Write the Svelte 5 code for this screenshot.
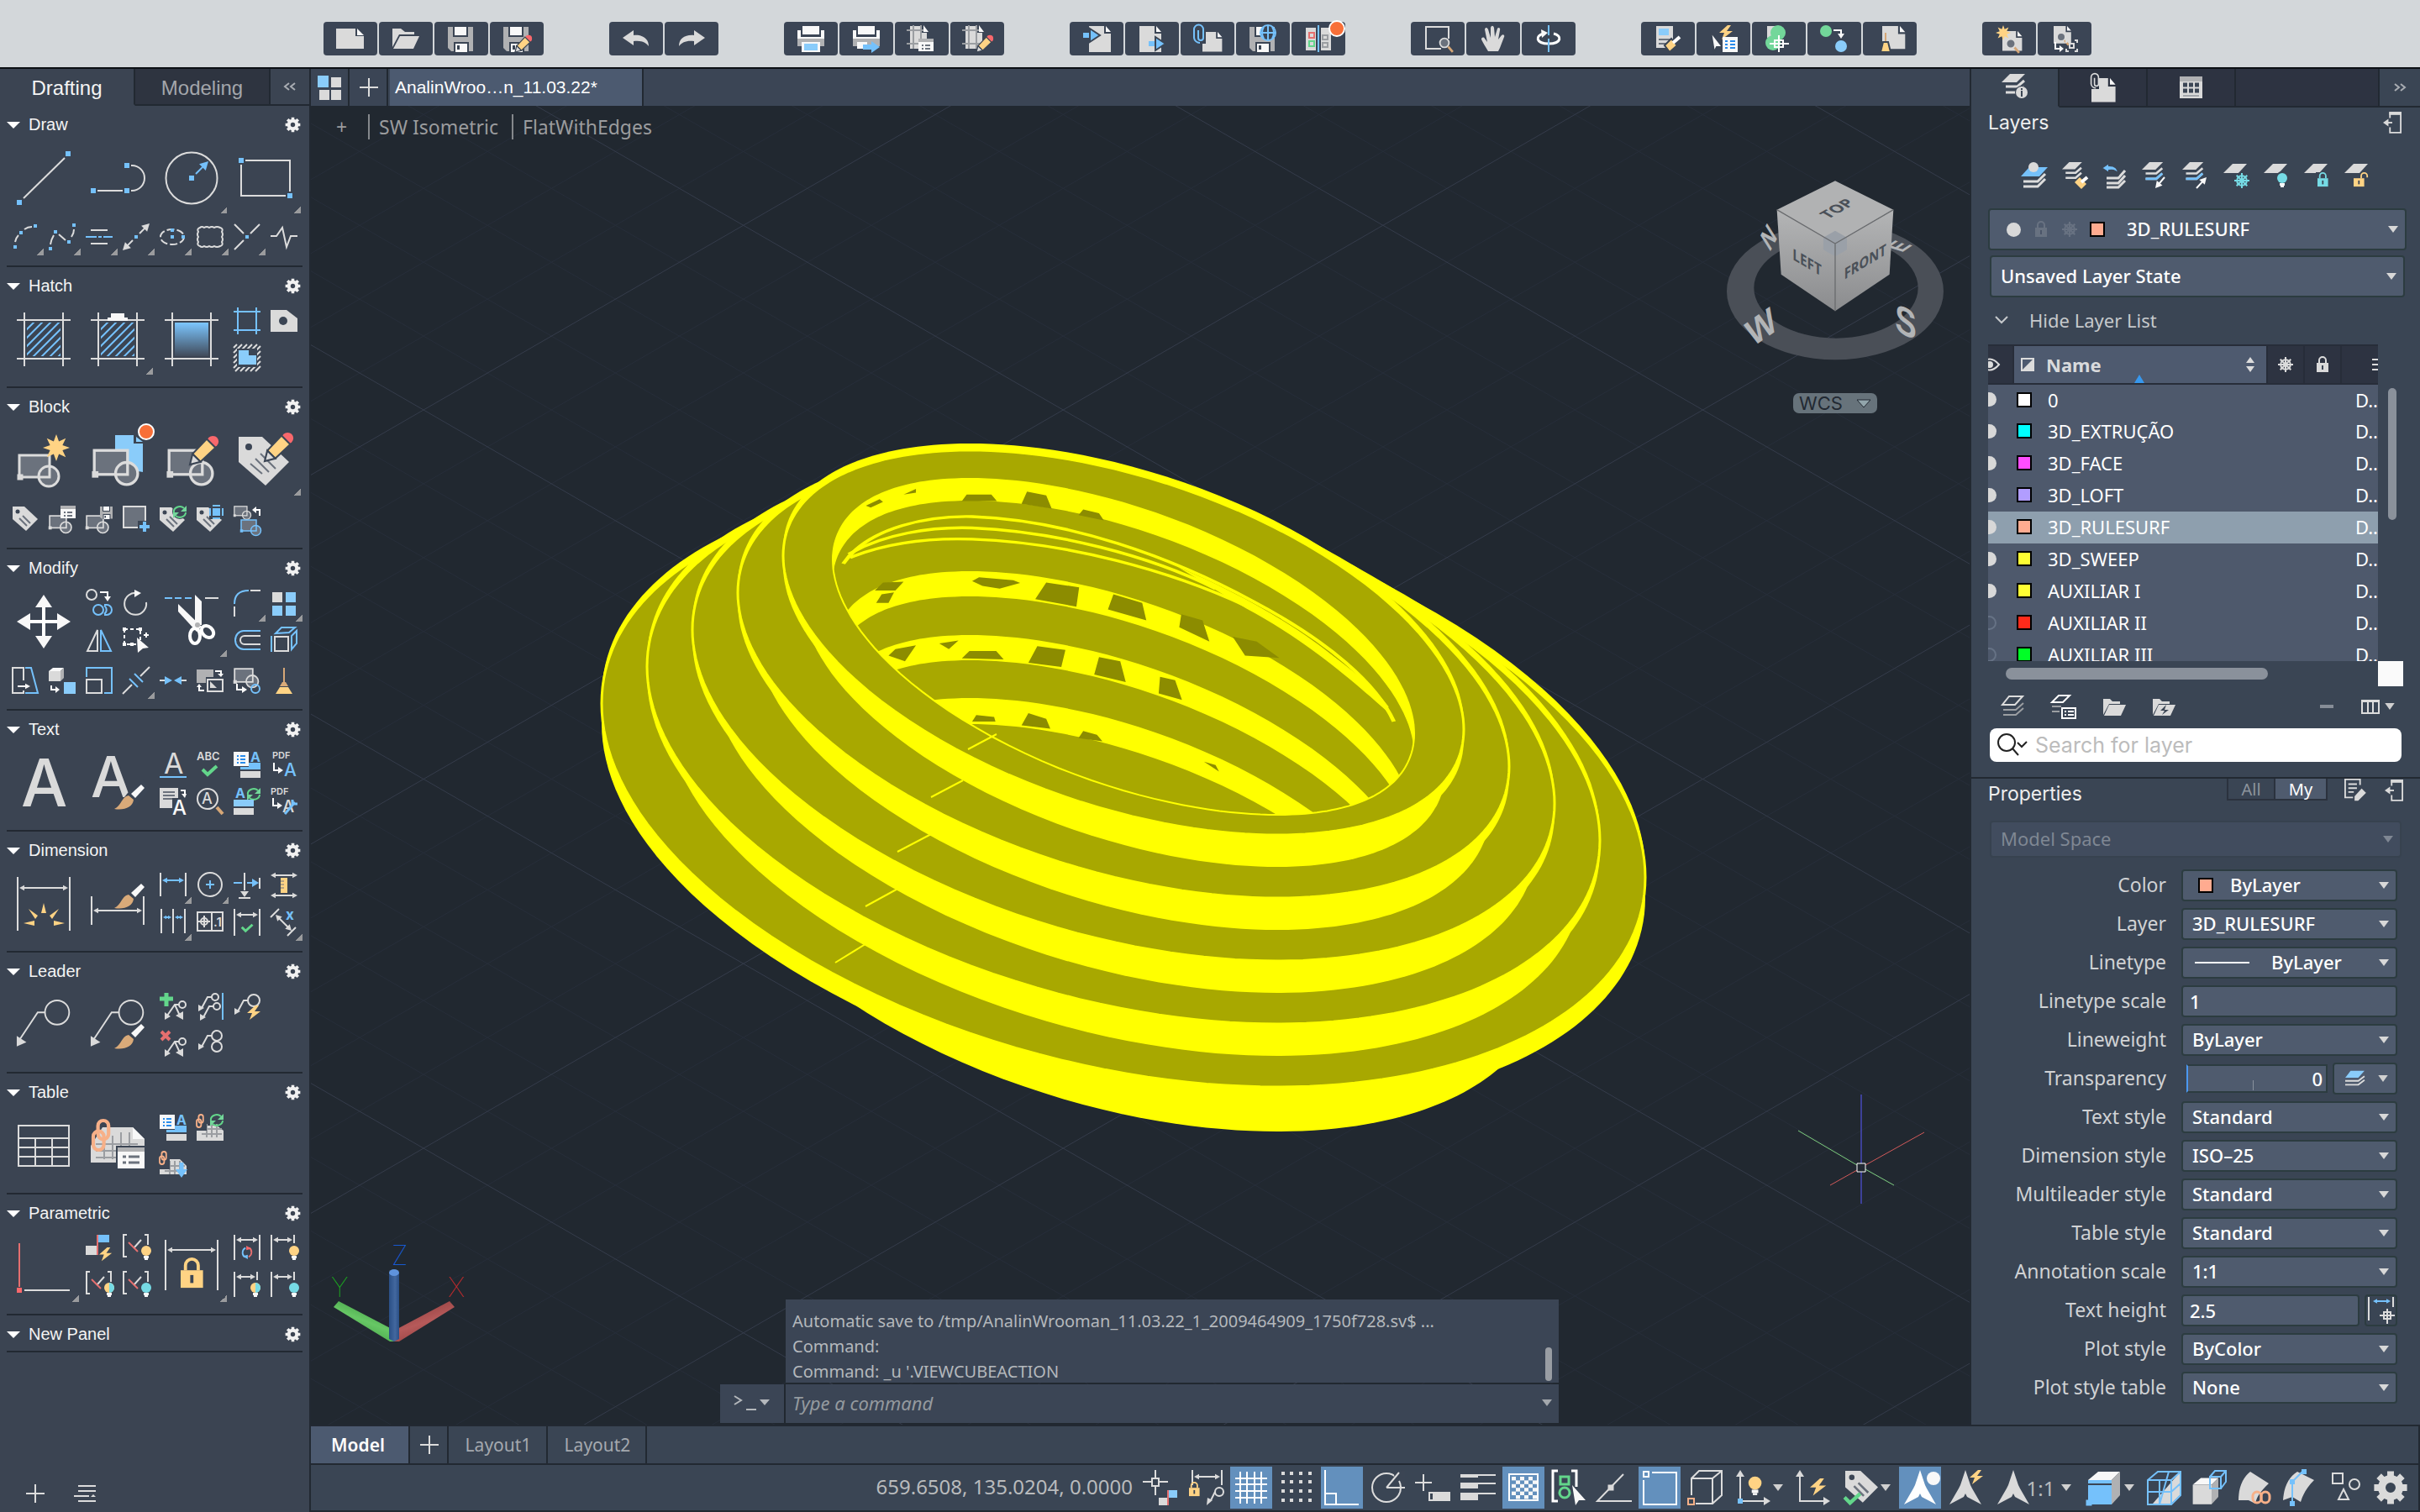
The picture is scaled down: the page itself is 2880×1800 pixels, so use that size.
<script>
  // ---------- drawing helpers for the icon set ----------
  const sq = (x, y, c = 'fb', s = 6) => `<rect class="${c}" x="${x - s / 2}" y="${y - s / 2}" width="${s}" height="${s}"/>`;
  const ln = (d, c = 'sw', w = 2) => `<path class="${c}" stroke-width="${w}" d="${d}"/>`;
  const fl = (d, c = 'fw') => `<path class="${c}" d="${d}"/>`;
  const box = (x, y, w, h, c = 'fw') => `<rect class="${c}" x="${x}" y="${y}" width="${w}" height="${h}"/>`;
  const ci = (x, y, r, c = 'sw', w = 2) => `<circle class="${c}" stroke-width="${w}" cx="${x}" cy="${y}" r="${r}"/>`;
  const at = (x, y, s, body) => `<g transform="translate(${x} ${y}) scale(${s})">${body}</g>`;
  const tx = (x, y, size, t, c = 'fw', w = 500) => `<text class="${c} glyph" x="${x}" y="${y}" font-size="${size}" font-weight="${w}">${t}</text>`;
  function arrow(x1, y1, x2, y2, c = 'w', h = 7, both = false, w = 2) {
    const a = Math.atan2(y2 - y1, x2 - x1);
    const head = (x, y, t) => {
      const bx = x - h * Math.cos(t), by = y - h * Math.sin(t);
      const px = h * 0.55 * Math.sin(t), py = -h * 0.55 * Math.cos(t);
      return fl(`M${x} ${y}L${bx + px} ${by + py}L${bx - px} ${by - py}Z`, 'f' + c);
    };
    const sx = both ? x1 + (h - 1) * Math.cos(a) : x1, sy = both ? y1 + (h - 1) * Math.sin(a) : y1;
    const ex = x2 - (h - 1) * Math.cos(a), ey = y2 - (h - 1) * Math.sin(a);
    return ln(`M${sx} ${sy}L${ex} ${ey}`, 's' + c, w) + head(x2, y2, a) + (both ? head(x1, y1, a + Math.PI) : '');
  }
  const pencil = (x, y, s = 1) => at(x, y, s, `<circle class="fr" cx="26" cy="-26" r="6.5"/>` + fl('M3 -12L19 -29L29 -19L12 -3Z', 'fy outline') + fl('M0 0L3 -12L12 -3Z', 'fw outline'));
  const brush = (x, y, s = 1) => at(x, y, s, fl('M0 0C9 -4 8 -14 17 -16L23 -11C22 -2 12 2 0 0Z', 'fn') + fl('M20 -18L32 -29L36 -25L25 -13Z', 'fp'));
  const bolt = (x, y, s = 1) => at(x, y, s, fl('M10 0L0 9H6L3 17L16 7H9L14 0Z', 'fy'));
  const bulb = (x, y, c = 'fy') => ci(x, y, 6, c, 0) + box(x - 3, y + 6, 6, 3, 'fp') + box(x - 2, y + 9, 4, 2, 'fp');
  const bulb2 = (x, y) => bulb(x, y) + fl(`M${x} ${y - 6}A6 6 0 0 1 ${x} ${y + 6}Z`, 'ft');
  const lock = (x, y, s = 1, c = 'y', open = false) => at(x, y, s, ln(open ? 'M10 8V5A4 4 0 0 1 18 5V7' : 'M3 8V5A4 4 0 0 1 11 5V8', 's' + c) + box(0, 8, 14, 11, 'f' + c) + box(6, 11, 2, 5, 'fk'));
  const refresh = (x, y, s = 1, a = 'g', b = 'g') => at(x, y, s, ln('M-7 1A7 6 0 0 1 5 -4', 's' + a) + fl('M8 -7V0H1Z', 'f' + a) + ln('M7 1A7 6 0 0 1 -5 5', 's' + b) + fl('M-8 8V1H-1Z', 'f' + b));
  const check = (x, y, s = 1) => at(x, y, s, ln('M1 5L7 11L18 1', 'sg', 4));
  const tagBase = fl('M0 0H14L30 15L16 29L0 15Z') + ci(6, 6, 2.5, 'fk', 0) + ln('M12 11L21 20M8 14L17 23', 'sm', 2);
  const star = (x, y, r) => { let d = ''; for (let i = 0; i < 16; i++) { const q = i % 2 ? r * 0.5 : r, t = i * Math.PI / 8; d += (i ? 'L' : 'M') + (x + q * Math.cos(t)).toFixed(1) + ' ' + (y + q * Math.sin(t)).toFixed(1); } return fl(d + 'Z', 'fy'); };
  const block = (x, y, s, c = 'w') => at(x, y, s, `<rect class="fm s${c}x" stroke-width="3" x="2" y="2" width="36" height="26"/>` + `<circle class="fm s${c}x" stroke-width="3" cx="37" cy="27" r="12"/>` + ln('M38 16V28H26', 's' + c, 3) + sq(3, 28, 'f' + c, 7));
  const card = (x, y, s = 1) => at(x, y, s, box(0, 0, 18, 15, 'fp') + box(0, 0, 18, 4, 'fh') + ln('M4 8H6M8 8H14M4 12H6M8 12H14', 'sm', 2));
  const frame = ln('M9 0V64M55 0V64M0 9H64M0 55H64');
  const hatchLines = `<g clip-path="url(#hatch-clip)">` + ln('M4 28L28 4M4 38L38 4M4 48L48 4M4 58L58 4M12 60L60 12M22 60L60 22M32 60L60 32M42 60L60 42', 'sb') + '</g>';
  const aList = box(0, 1, 18, 17, 'fp') + ln('M4 6H6M8 6H14M4 10H6M8 10H14M4 14H6M8 14H14', 'si', 2) + tx(20, 13, 16, 'A', 'fb', 700) + box(18, 14, 14, 8, 'fb') + box(8, 19, 24, 3, 'fb') + box(8, 24, 24, 8);
  const dimH = (x1, x2, y, t, b, c = 'w') => ln(`M${x1} ${t}V${b}M${x2} ${t}V${b}`) + arrow(x1 + 2, y, x2 - 2, y, c, 6, true);
  const leader = (x, y, s) => at(x, y, s, ci(52, 17, 15, 'sw', 2) + ln('M37 17H28L6 50') + fl('M2 46V59L14 54Z'));
  const sLeader = (x, y, r = 5) => ci(x, y, r) + ln(`M${x - r} ${y}H${x - r - 5}L${x - r - 12} ${y + 13}`) + fl(`M${x - r - 16} ${y + 17}V${y + 9}L${x - r - 9} ${y + 13}Z`);
  const grid = (c = 'sh') => ln('M6 18H30M6 24H30M12 12V28M18 12V28M24 12V28', c, 2);
  const ang = ln('M5 0H1V26H5M26 0H30V12') + ln('M22 6L13 16', 'sw') + ln('M7 9L18 20', 'sr');
  const stackOf = (c1 = 'fw', c2 = 'sw') => fl('M10 0H28L18 10H0Z', c1) + ln('M5 15H19L27 8M5 22H19L27 15', c2, 3);
  const para = fl('M12 2H29L19 13H1Z');
  const flake = (x, y, r, c) => ln(`M${x - r} ${y}H${x + r}M${x} ${y - r}V${y + r}M${x - r * 0.7} ${y - r * 0.7}L${x + r * 0.7} ${y + r * 0.7}M${x + r * 0.7} ${y - r * 0.7}L${x - r * 0.7} ${y + r * 0.7}`, c) + ci(x, y, r * 0.65, c);
  const page = fl('M0 0H18V9H26V26H0Z') + fl('M20 0L26 7H20Z', 'fp');
  const disk = fl('M2 2H32V31H6L2 27Z', 'fh') + box(9, 1, 16, 12, 'fp outline') + box(9, 20, 18, 12, 'fk') + box(11, 22, 14, 10, 'fp') + box(13, 24, 3, 5, 'fk');
  const printer = box(8, 1, 20, 10, 'fp') + fl('M2 6H6V14H30V6H34V18H2Z', 'fp') + box(2, 16, 32, 9, 'fh');
  const lens = (x, y, s = 1) => at(x, y, s, ci(0, 0, 6, 'fm swx', 2) + ln('M5 5L11 12', 'sn', 3));
  const lay = fl('M4 1H18V9H24V28H4Z') + ln('M0 6H24M0 22H24M8 0V28M17 0V28', 'sh', 2) + fl('M20 0L26 8H20Z', 'fp');
  const clip = (s) => ln('M7 6V15A3 3 0 0 0 13 15V5A5 5 0 0 0 2 5V15A7 7 0 0 0 9 21', s, 2);
  const compass = fl('M21 0L27 18L29 22L40 41L23 32L21 28L19 32L2 41L13 22L15 18Z');
  const cubeP = fl('M2 12L14 2H40L30 12Z', 'fp') + fl('M30 12L40 2V30L30 41Z', 'fh');
  const chain = (x, y, s) => at(x, y, s, `<rect class="so" stroke-width="3" x="4" y="0" width="9" height="16" rx="4.5"/><rect class="so" stroke-width="3" x="0" y="9" width="9" height="16" rx="4.5"/>`);
  const gearD = (() => { let d = ''; for (let i = 0; i < 8; i++) { [[-0.2, 20], [0.2, 20], [0.26, 15], [0.52, 15]].forEach(([o, r], j) => { const t = i * Math.PI / 4 + o; d += (i || j ? 'L' : 'M') + (21 + r * Math.cos(t)).toFixed(1) + ' ' + (21 + r * Math.sin(t)).toFixed(1); }); } return d + 'ZM27 21A6 6 0 1 0 15 21A6 6 0 1 0 27 21Z'; })();

  const icons = {
    // draw
    line: ln('M8 56L57 8') + sq(3, 61) + sq(61, 3),
    polyline: ln('M8 47H38M48 17H49A15 15 0 0 1 49 47H48') + sq(3, 47) + sq(43, 47) + sq(43, 17),
    circle: ci(32, 32, 30.5) + sq(32, 32) + arrow(37, 27, 52, 12, 'b', 10),
    rectangle: ln('M8 11H61V48M56 53H3V16') + sq(3, 11) + sq(61, 53),
    arc: ln('M4 22Q5 17 8 14M15 7Q19 4 24 4') + sq(4, 28, 'fb', 4) + sq(11, 11, 'fb', 4) + sq(28, 3, 'fb', 4),
    spline: ln('M2 25Q3 19 6 14M12 13L20 20M27 16Q30 12 30 7') + sq(2, 30, 'fb', 4) + sq(8, 10, 'fb', 4) + sq(24, 22, 'fb', 4) + sq(30, 2, 'fb', 4),
    multiline: ln('M6 8H26M6 24H26') + ln('M0 16H13M15 16H19M21 16H32', 'sb'),
    ray: arrow(20, 12, 32, 0, 'w', 9) + arrow(12, 20, 0, 32, 'w', 9) + sq(16, 16, 'fb', 4),
    ellipse: `<ellipse class="sw" stroke-width="2" stroke-dasharray="9 3" cx="15" cy="16" rx="14" ry="9"/>` + sq(15, 8, 'fb', 4) + sq(15, 16, 'fb', 4) + sq(28, 16, 'fb', 4),
    cloud: ln('M4 5Q6 3 9 5Q12 3 15 5Q18 3 21 5Q24 3 28 5Q32 6 30 10Q32 13 30 16Q32 19 30 22Q32 26 28 27Q24 29 21 27Q18 29 15 27Q12 29 9 27Q6 29 4 27Q0 26 2 22Q0 19 2 16Q0 13 2 10Q0 6 4 5Z'),
    cross: ln('M1 1L12 12M31 1L20 12M1 31L12 20') + sq(16, 16, 'fb', 4),
    breakline: ln('M0 15H7L14 5L19 28L24 15H32'),
    // hatch
    hatch: frame + hatchLines,
    hatchEdit: frame + hatchLines + fl('M24 1H40V6H44V10H20V6H24Z', 'fp'),
    gradient: frame + '<rect x="12" y="12" width="40" height="40" fill="url(#blue-fade)"/>',
    boundary: ln('M5 0V32M27 0V32M0 5H32M0 27H32', 'sb'),
    wipeout: fl('M0 3H19L32 13V29H0Z') + ci(15, 16, 5, 'fk', 0),
    region: ln('M0 4L4 0M0 10L10 0M0 16L16 0M0 22L22 0M0 28L28 0M2 32L32 2M8 32L32 8M14 32L32 14M20 32L32 20M26 32L32 26', 'sw', 2) + box(4, 5, 24, 22, 'fk') + fl('M6 7H18V13H27V24H6Z', 'fc'),
    // block
    blockNew: block(1, 24, 1) + star(47, 17, 16),
    blockInsert: fl('M29 2H51V12H62V46L29 40Z', 'fc') + fl('M54 4L62 10H54Z', 'fc') + block(2, 18, 1.1) + `<circle cx="66" cy="-2" r="9" class="badge" stroke-width="2"/>`,
    blockEdit: block(3, 18, 1.1) + pencil(30, 37, 1.05),
    attrEdit: at(0, 4, 2, fl('M0 0H14L30 15L16 29L0 15Z') + ci(6, 6, 2, 'fk', 0) + ln('M13 10L22 19M10 13L18 21M7 16L14 22', 'sm', 1)) + pencil(31, 33, 1.05),
    tag: at(1, 1, 1, tagBase),
    blockProps: block(0, 11, 0.55) + card(14, 0),
    blockSave: block(0, 11, 0.55) + at(16, 0, 0.5, disk),
    blockAdd: `<rect class="fm swx" stroke-width="2" x="1" y="1" width="26" height="25"/>` + box(18, 18, 14, 14, 'fk') + ln('M26 19V31M20 25H32', 'sb', 4),
    tagSync: at(0, 2, 1, tagBase) + ci(24, 7, 9, 'fk', 0) + refresh(24, 7),
    tagSel: at(0, 2, 1, tagBase) + box(15, 0, 17, 16, 'fk') + box(19, 3, 9, 9, 'fb') + ln('M16 3V12M31 3V12M19 0H28M19 15H28', 'sb', 2),
    blockSwap: block(0, 0, 0.42) + block(8, 16, 0.5, 'b') + ln('M31 12V5H24', 'sp') + fl('M22 5L27 1V9Z', 'fp'),
    // modify
    move: ln('M32 12V52M12 32H52', 'sp', 4) + fl('M32 0L42 15H22ZM32 64L42 49H22ZM0 32L16 22V42ZM64 32L48 22V42Z', 'fp'),
    copy: ci(7, 6, 6) + ln('M17 3H26V9', 'sp') + fl('M22 8H30L26 14Z', 'fp') + ci(15, 24, 6, 'sb') + ln('M22 18H25A6 6 0 0 1 25 30H22M22 19A6 6 0 0 1 22 29', 'sb'),
    rotate: ln('M28 15A13 13 0 1 1 17 4') + fl('M14 0L22 4L14 9Z', 'fp'),
    trim: ln('M0 4H9M12 4H20M24 4H32', 'sb') + ln('M48 4H64') + fl('M36 0L44 8V36H36Z', 'fp') + fl('M16 11L44 38L38 44L16 20Z', 'fp') + `<ellipse class="sp" stroke-width="4" cx="36" cy="49" rx="6" ry="9"/><ellipse class="sp" stroke-width="4" cx="51" cy="44" rx="6" ry="8" transform="rotate(-48 51 44)"/>` + ci(39, 36, 3, 'fh', 0),
    fillet: ln('M20 1H32M1 20V32') + ln('M1 17C1 6 7 1 18 1', 'sb'),
    array: box(2, 3, 12, 12) + box(18, 3, 12, 12, 'fc') + box(2, 19, 12, 12, 'fc') + box(18, 19, 12, 12, 'fc'),
    mirror: ln('M14 4V29H2Z') + ln('M18 4V29H30Z', 'sb'),
    select: `<rect class="sp" stroke-width="2" stroke-dasharray="4 3" x="2" y="3" width="19" height="18"/>` + sq(2, 3, 'fp', 4) + sq(21, 3, 'fp', 4) + sq(2, 21, 'fp', 4) + sq(11, 21, 'fp', 4) + fl('M17 13L31 25L24 26L18 31Z', 'fp') + ln('M28 7V13M25 10H31', 'sp'),
    offset: ln('M32 5H12A10 11 0 0 0 12 27H32', 'sb') + ln('M32 11H13A5 5 0 0 0 13 21H32', 'sw'),
    extrude: ln('M5 12H21V29H5Z', 'sw', 2) + ln('M1 11V30M6 8L13 1H29L22 7ZM25 11L31 5V20L25 27Z', 'sb'),
    stretch: ln('M14 16V1H1V31H14V28') + ln('M16 1H23L31 31H16', 'sb') + arrow(7, 23, 22, 23, 'p', 6),
    cube: fl('M0 5L5 1H18L14 5Z', 'fp') + box(0, 5, 14, 12) + fl('M14 5L18 1V13L14 17Z', 'fh') + box(18, 18, 14, 14, 'fc') + ln('M3 22V27H9', 'sp') + fl('M8 23L13 27L8 31Z', 'fp'),
    scale: ln('M1 15V31H19V15Z') + ln('M1 12V1H31V31H22', 'sb'),
    breakAt: ln('M0 32L11 21M21 11L32 0') + ln('M8 14L18 24M14 8L24 18', 'sb'),
    join: ln('M0 16H8M24 16H32') + fl('M6 11L15 16L6 21ZM26 11L17 16L26 21Z', 'fb'),
    swap: box(0, 3, 20, 16, 'fh') + box(11, 12, 21, 19, 'fk') + ln('M13 15H31V29H13Z') + fl('M16 17L24 25H16Z') + ln('M22 5H29V9M9 28H3V24', 'sp') + fl('M25 8H32L29 12ZM0 24H6L3 20Z', 'fp'),
    extract: block(0, 1, 0.6) + ci(26, 26, 5, 'sb') + ln('M4 20V27H11', 'sp') + fl('M10 23L16 27L10 31Z', 'fp'),
    purge: ln('M16 1V20', 'sn', 2) + fl('M14 18H18L21 23H11Z', 'fn') + fl('M11 24H21L26 32H6Z', 'fy'),
    // text
    textA: tx(5, 60, 78, 'A', 'fw', 500),
    textBrush: tx(0, 49, 68, 'A', 'fw', 500) + fl('M28 64L44 44L62 28L70 40L50 64Z', 'fk') + brush(28, 63),
    textLine: tx(5, 27, 34, 'A', 'fw', 400) + ln('M0 31H32', 'sb'),
    spell: tx(0, 11, 13, 'ABC', 'fw', 600) + check(6, 17),
    textStyle: aList,
    pdfText: tx(2, 9, 11, 'PDF', 'fw', 600) + ln('M4 14V23H10', 'sp') + fl('M9 19L15 23L9 27Z', 'fp') + tx(16, 30, 21, 'A', 'fb'),
    textAlign: box(0, 0, 22, 24) + ln('M4 5H18M4 9H18M4 13H18', 'sm', 2) + box(15, 12, 17, 20, 'fk') + tx(15, 32, 24, 'A', 'fp') + ln('M25 3H30V8', 'sp') + fl('M26 7H32L30 12Z', 'fp'),
    textFind: ci(13, 13, 12) + tx(6, 19, 18, 'A') + ln('M24 23L31 31', 'sn', 4),
    textUpdate: tx(2, 12, 16, 'A', 'fb', 700) + refresh(24, 7) + box(0, 14, 24, 8, 'fc') + box(0, 24, 24, 8),
    pdfSet: tx(0, 8, 11, 'PDF', 'fw', 600) + ln('M3 12V21H9', 'sp') + fl('M8 17L14 21L8 25Z', 'fp') + tx(14, 29, 20, 'A') + ln('M17 31L29 17M26 14V19H32', 'sb', 3),
    // dimension
    dim: dimH(1, 63, 13, 0, 64) + fl('M32 31L35 43H29ZM14 38L25 46L22 50ZM50 38L39 46L42 50ZM8 55L21 52V58ZM57 55L44 52V58Z', 'fy'),
    dimBrush: dimH(1, 63, 40, 23, 57) + brush(28, 37),
    dimLinear: dimH(1, 31, 10, 1, 29, 'b'),
    dimRadius: ci(16, 15, 14) + ln('M16 10V20M11 15H21', 'sb'),
    dimBreak: ln('M31 7V20M13 1V22M6 31H20') + fl('M8 23H18L13 30Z') + ln('M0 13H10M16 13H22', 'sb') + fl('M22 8L30 13L22 18Z', 'fb'),
    dimSpace: arrow(0, 4, 32, 4, 'w', 6, true) + arrow(0, 28, 32, 28, 'w', 6, true) + box(12, 7, 8, 18, 'fy') + ln('M12 11H16M12 15H16M12 19H16', 'sm', 1),
    dimCont: ln('M2 0V29M16 0V29M30 0V29') + arrow(4, 10, 14, 10, 'b', 4, true) + arrow(18, 10, 28, 10, 'b', 4, true),
    tolerance: ln('M1 4H31V26H1ZM18 4V26M2 15H16M9 8V22') + ci(9, 15, 4) + tx(20, 21, 15, '.1', 'fw', 600),
    dimCheck: dimH(1, 31, 7, 0, 32) + check(9, 18, 0.75),
    dimX: ln('M0 10L10 0M20 32L30 22') + arrow(6, 7, 25, 26, 'w', 7, true) + tx(18, 13, 17, 'x', 'fb', 700),
    // leader
    leader: leader(-2, 1, 0.96),
    leaderBrush: leader(-2, 1, 0.96) + brush(28, 60),
    leaderAdd: ln('M8 0V16M0 7H16', 'sg', 5) + ci(27, 14, 4) + ln('M23 14H18L9 27M18 14L24 27') + fl('M6 32V23L13 28ZM28 32V22L19 27Z'),
    leaderAlign: sLeader(22, 5, 4) + sLeader(24, 16, 4) + ln('M31 0V32', 'sb'),
    leaderBolt: sLeader(24, 9, 7) + bolt(16, 15),
    leaderDel: ln('M2 2L12 12M12 2L2 12', 'sr', 4) + ci(27, 14, 4) + ln('M23 14H18L9 27M18 14L24 27') + fl('M6 32V23L13 28ZM28 32V22L19 27Z'),
    leaderCollect: sLeader(24, 7, 6) + ci(24, 20, 6),
    // table
    table: ln('M2 8H62V56H2ZM2 23H62M2 34H62M2 45H62M22 23V56M42 23V56'),
    tableLink: fl('M14 10H50L64 24V52H0V32Z') + fl('M50 10L64 24H50Z', 'fp') + ln('M6 30H56M6 38H56M6 46H56M16 24V48M26 20V48M36 16V48M46 16V48', 'sh', 2) + box(30, 32, 36, 28, 'fk') + box(32, 34, 32, 25, 'fp') + box(32, 34, 32, 5, 'fh') + ln('M38 45H42M45 45H58M38 52H42M45 52H58', 'sm', 3) + chain(3, 2, 1.4),
    tableStyle: aList,
    tableSync: fl('M0 14H24L32 20V32H0Z') + grid() + box(0, 0, 12, 20, 'fk') + chain(0, 1, 0.6) + refresh(24, 7),
    tableDown: fl('M0 10H24L32 18V28H0Z') + grid() + box(0, 0, 12, 22, 'fk') + chain(0, 1, 0.6) + ln('M26 14V24', 'sb', 5) + fl('M19 22H33L26 32Z', 'fb'),
    // parametric
    param: ln('M3 4V56', 'sr') + ln('M9 60H63') + sq(3, 60, 'fr'),
    autoConstrain: ln('M14 0V24', 'sr') + box(15, 0, 13, 9, 'fb') + box(0, 13, 13, 11) + bolt(16, 15, 0.95),
    showAll: ang + bulb(28, 19),
    showSome: ang + bulb2(28, 19),
    hideAll: ang + bulb(28, 19, 'ft'),
    dimLock: dimH(1, 63, 12, 0, 60) + lock(19, 21, 1.9),
    paramConv: dimH(1, 31, 6, 0, 30) + at(16, 21, 0.9, ln('M-2 -6A7 7 0 0 0 -3 6', 'sb') + fl('M-6 5L1 3V9Z', 'fb') + ln('M2 6A7 7 0 0 0 3 -6', 'sr') + fl('M6 -5L-1 -3V-9Z', 'fr')),
    dShow: ln('M1 0V30M28 0V10') + arrow(3, 6, 26, 6, 'w', 6, true) + bulb(28, 19),
    dSome: ln('M1 0V30M28 0V10') + arrow(3, 6, 26, 6, 'w', 6, true) + bulb2(26, 19),
    dHide: ln('M1 0V30M28 0V10') + arrow(3, 6, 26, 6, 'w', 6, true) + bulb(28, 19, 'ft'),
    // top toolbar
    new: fl('M1 4H24V13H34V28H1Z') + fl('M26 4L34 12H26Z', 'fp'),
    open: fl('M2 4H12L17 8H28V11H10L2 26Z') + fl('M11 13H34L27 28H3Z'),
    save: disk,
    saveAs: disk + pencil(16, 32, 0.62),
    undo: fl('M2 15L15 6V12C26 11 33 16 33 25C29 20 24 18 15 19V24Z'),
    redo: fl('M34 15L21 6V12C10 11 3 16 3 25C7 20 12 18 21 19V24Z'),
    print: printer + box(7, 20, 22, 12, 'fp') + box(10, 22, 16, 8, 'fc'),
    printTo: printer + box(7, 20, 12, 8, 'fp') + ln('M14 26H26', 'sb', 6) + fl('M24 19L34 26L24 33Z', 'fb'),
    pageSet: lay + at(14, 16, 1, card(0, 0)),
    pageEdit: lay + pencil(17, 32, 0.62),
    importF: at(9, 1, 1, fl('M0 0H18V9H26V31H0Z') + fl('M20 0L26 7H20Z', 'fp')) + ln('M2 12H12', 'sb', 6) + fl('M10 4L22 12L10 20Z', 'fb outline'),
    exportF: at(3, 1, 1, fl('M0 0H18V9H26V31H0Z') + fl('M20 0L26 7H20Z', 'fp')) + ln('M14 22H24', 'sb', 6) + fl('M22 14L34 22L22 30Z', 'fb outline'),
    attach: at(12, 8, 0.9, page) + box(1, 0, 15, 22, 'fk') + clip('sb'),
    web: disk + ci(24, 9, 9, 'fk sbx', 2) + ln('M15 9H33M24 0V18M19 2Q15 9 19 16M29 2Q33 9 29 16', 'sb', 2),
    compare: box(3, 3, 12, 27) + box(21, 3, 12, 27) + ln('M18 0V32', 'sb') + ln('M7 9H13V15H7Z', 'sr') + ln('M7 19H13V25H7Z', 'sg') + ln('M23 12H29V17H23ZM23 21H29V26H23Z', 'sh') + `<circle cx="40" cy="4" r="9" class="badge" stroke-width="2"/>`,
    zoomWin: ln('M22 28H4V2H31V16') + lens(26, 21, 0.9),
    pan: fl('M12 31C9 26 6 21 4 17C4 14 7 14 8 16L11 20L8 5C9 2 11 3 12 5L15 15V3C16 0 18 0 19 3L20 14L23 4C24 2 27 3 26 6L24 17L28 12C30 10 32 12 31 14L26 27L24 31Z'),
    orbit: ln('M12 10C2 12 2 22 18 22C34 22 34 12 24 10', 'sp', 3) + fl('M9 5L17 9L10 15Z', 'fp') + ln('M18 0V12M18 16V32', 'sb', 2),
    match: box(4, 1, 20, 26) + box(7, 4, 12, 8, 'fc') + ln('M7 17H21M7 22H16', 'sm', 2) + fl('M14 24L22 16L29 24L20 32Z', 'fy outline') + ln('M24 21L32 14', 'sp', 4),
    quick: bolt(13, 0) + fl('M3 8L17 26L10 26L7 32Z', 'fp outline') + box(17, 14, 18, 18, 'fp') + ln('M20 19H23M26 19H32M20 23H23M26 23H32M20 27H23M26 27H32', 'si'),
    plot: box(4, 1, 14, 14) + ci(17, 9, 9, 'fg', 0) + ci(11, 21, 9, 'fg', 0) + ln('M18 12V32M7 22H30', 'sp') + ln('M13 18H23V26H13Z', 'sp'),
    geo: ci(8, 7, 7, 'fg', 0) + ci(26, 25, 7, 'fc', 0) + ln('M17 6H26V11', 'sp') + fl('M22 10H30L26 16Z', 'fp'),
    clean: at(9, 1, 1.05, page) + ln('M13 9V22', 'sn') + fl('M10 20H16L19 32H7Z', 'fy outline'),
    sheet1: at(10, 7, 0.9, page) + star(11, 9, 9) + lens(20, 22, 0.9),
    sheet2: at(5, 1, 0.8, page) + lens(14, 14, 0.8) + ln('M7 20V28H14', 'sp') + fl('M12 24L17 28L12 32Z', 'fp') + ln('M20 21V18H23M30 18H33V21M33 28V31H30M23 31H20V28M24 22H29V27H24Z'),
    // tabs and right palette
    tiles: box(0, 0, 13, 14, 'fc') + box(16, 2, 12, 12) + box(2, 17, 12, 12) + box(16, 17, 12, 12),
    layersInfo: stackOf() + ci(24, 22, 8, 'fk', 0) + ci(24, 22, 7, 'fw', 0) + box(23, 20, 2, 7, 'fk') + box(23, 17, 2, 2, 'fk'),
    refs: at(2, 5, 1.1, page) + box(0, 0, 11, 18, 'fd') + at(0, 0, 0.8, clip('sw')),
    palette: box(2, 3, 27, 26) + box(2, 3, 27, 6, 'fh') + ln('M6 13H11M13 13H18M20 13H25M6 20H11M13 20H18M20 20H25', 'sk', 5) + ln('M6 26H25', 'sm', 1),
    dock: ln('M9 9V2H23V28H9V21') + box(8, 1, 16, 4) + ln('M4 15H12', 'sw') + fl('M0 15L7 10V20Z'),
    lyMake: fl('M10 6H32L22 17H0Z', 'fb') + ln('M3 23H20L29 14M3 29H20L29 20', 'sw', 3) + ci(15, 6, 6, 'fw', 0),
    lyMatch: at(1, 0, 0.85, stackOf()) + fl('M16 24L22 18L30 26L24 32Z', 'fy') + ln('M24 24L31 18', 'sp', 4),
    lyPrev: ln('M6 19H20L28 10M6 25H20L28 16M6 30H20L28 22', 'sw', 3) + fl('M0 7L9 1V4C17 4 20 8 20 14C17 10 14 9 9 10V13Z', 'fb outline'),
    lyIso: at(0, 0, 0.9, stackOf() + ln('M5 22H19L27 15', 'sb', 3)) + arrow(27, 18, 16, 31, 'p', 8),
    lyUniso: at(0, 0, 0.9, stackOf() + ln('M5 22H19L27 15', 'sb', 3)) + arrow(17, 31, 29, 18, 'p', 8),
    lyFreeze: para + ci(23, 22, 10, 'fk', 0) + flake(23, 22, 9, 'st'),
    lyOff: para + ci(23, 19, 8, 'fk', 0) + bulb(23, 19, 'ft'),
    lyLock: para + box(15, 12, 16, 18, 'fk') + lock(17, 12, 0.9, 't'),
    lyUnlock: para + box(11, 19, 14, 12, 'fk') + lock(12, 12, 0.9, 'y', true),
    stack: ln('M9 2H25L16 12H1Z', 'sw') + ln('M2 18H17L26 10M2 24H17L26 16', 'sh', 2),
    stackProps: ln('M9 2H22L14 10H1Z', 'sp') + ln('M1 15H12M1 21H10', 'sh', 2) + ln('M13 17H29V29H13ZM16 21H18M20 21H27M16 25H18M20 25H27', 'sp', 2),
    folder: fl('M1 5H9L12 8H21V11H8L1 24Z') + fl('M8 12H28L22 25H2Z'),
    folderBolt: fl('M1 5H9L12 8H21V11H8L1 24Z') + fl('M8 12H28L22 25H2Z') + fl('M17 12L10 19H15L12 24L20 18H15Z', 'fk'),
    columns: ln('M1 5H21V20H1ZM8 5V20M14 5V20') + ln('M1 6H21', 'sw', 2),
    editList: ln('M20 8V1H1V24H12') + ln('M5 7H16M5 12H16M5 17H12') + fl('M12 22L22 11L29 18L18 29H12Z', 'fw outline'),
    snow: flake(10, 10, 9, 'sw'),
    padlock: at(3, 0, 1, lock(0, 0, 1, 'w')),
    pickAnnot: ln('M1 0V28M30 0V12') + arrow(6, 5, 27, 5, 'b', 5, true) + ln('M14 22H32M23 14V32M19 18H27V26H19Z'),
    layerStack: fl('M10 2H28L20 11H3Z', 'fc') + ln('M3 15H20L28 9M3 20H20L28 14', 'sw', 2),
    // status bar
    infer: ln('M15 0V10M15 19V30M0 14H11M19 14H30M11 10H19V19H11Z') + box(30, 24, 11, 9, 'fc') + box(19, 33, 11, 9) + ln('M30 24V42', 'sr'),
    dynDim: dimH(5, 40, 8, 0, 18) + lock(1, 14, 0.9) + ci(37, 26, 5) + ln('M32 26L27 36') + fl('M22 42L23 33L29 36Z'),
    gridOn: ln('M8 2V40M16 2V40M25 2V40M33 2V40M2 10H40M2 17H40M2 25H40M2 33H40', 'sp', 2),
    snap: [4, 14, 25, 36].map((y) => [5, 15, 26, 37].map((x) => sq(x, y, 'fw', 4)).join('')).join(''),
    ortho: ln('M1 0V41H41M1 28H14V41', 'sp', 2),
    polar: ci(20, 21, 17) + fl('M29 3L42 0V20L30 17Z', 'fk') + ln('M20 21H42M20 21L35 3M35 13A17 17 0 0 1 37 20'),
    dynIn: ln('M0 15H20M10 5V25') + ln('M17 27H41V36H17Z') + box(21, 27, 20, 9),
    weight: ln('M0 6H42M0 16H42M0 28H42') + box(0, 6, 21, 3) + box(0, 15, 21, 7) + box(0, 27, 21, 9),
    transp: ln('M4 5H38V36H4Z', 'sp') + [0, 1, 2, 3, 4, 5].map((r) => [0, 1, 2].map((c) => box(7 + c * 10 + (r % 2) * 5, 8 + r * 4.4, 5, 4.4, 'fp')).join('')).join(''),
    cycle: ln('M8 1H2V37H8M24 1H30V20', 'sp', 3) + ln('M11 8H21V17H11Z', 'sg', 3) + ci(16, 27, 6, 'sg', 3) + fl('M25 18L41 36L33 36L29 42Z', 'fp'),
    angle: ln('M32 5L1 37H42') + sq(17, 21, 'fw', 7),
    osnap: ln('M12 3H41V41H2V12M2 2H8V8H2Z', 'sp', 2),
    osnap3: ln('M5 10H30V40H10M5 30V10L14 1H41V30L30 40M30 10L41 1') + ln('M1 34H8V41H1Z', 'so'),
    ucsBulb: ln('M6 4V34M8 37H36') + fl('M6 0L11 8H1ZM42 37L34 32V42Z') + sq(6, 37, 'fb') + at(8, 0, 1.3, bulb(12, 12)),
    ucsBolt: ln('M6 4V37H36') + fl('M6 0L11 8H1ZM42 37L34 32V42Z') + bolt(18, 10, 1.2),
    annoTag: at(3, 1, 1.3, tagBase) + check(1, 27, 1.1),
    annoVis: `<g class="solid">${compass}</g>` + ci(37, 10, 8, 'fp', 0),
    annoAuto: compass + bolt(26, 0, 1),
    annoScale: compass,
    workspace: cubeP + box(2, 12, 28, 29, 'fb') + ln('M2 17H30', 'sk', 2) + sq(3, 39, 'fb', 7),
    isoWire: fl('M8 40L40 3V30L30 40Z') + ln('M2 12L14 2H41V30L30 41H2ZM2 12H30L41 2M30 12V41M2 26H30L41 16M16 12V41L27 2', 'sb', 2),
    isoObj: at(0, 8, 0.8, cubeP + box(2, 12, 28, 29)) + ln('M22 8H35V22H22ZM22 8L28 1H41V14L35 22M35 8L41 1', 'sb', 2),
    surf: fl('M2 36C2 20 8 8 16 2L38 16C30 24 24 30 22 40L14 36Z') + at(17, 26, 1, `<rect class="so" stroke-width="3" x="2" y="0" width="10" height="13" rx="5"/><rect class="so" stroke-width="3" x="12" y="0" width="10" height="13" rx="5"/>`),
    surf2: fl('M1 36C2 20 8 8 18 2L38 12C30 20 25 28 22 38L12 32Z') + ln('M26 0L12 14V42', 'sb') + sq(26, 2) + sq(12, 14) + sq(12, 40),
    shapes: ln('M6 4H18V16H6Z') + ci(32, 17, 6) + ln('M19 23L25 35H13Z'),
    settings: `<path class="fw" fill-rule="evenodd" d="${gearD}"/>`
  };

  // ---------- data ----------
  const big = (k, fly = false) => ({ k, fly, big: true });
  const sm = (k, fly = false) => ({ k, fly, big: false });
  const sections = [
    { name: 'Draw', items: [big('line'), big('polyline'), big('circle', true), big('rectangle', true), sm('arc', true), sm('spline', true), sm('multiline', true), sm('ray', true), sm('ellipse', true), sm('cloud', true), sm('cross', true), sm('breakline')] },
    { name: 'Hatch', items: [big('hatch'), big('hatchEdit', true), big('gradient'), sm('boundary'), sm('wipeout'), sm('region')] },
    { name: 'Block', items: [big('blockNew'), big('blockInsert'), big('blockEdit'), big('attrEdit', true), sm('tag'), sm('blockProps'), sm('blockSave'), sm('blockAdd'), sm('tagSync'), sm('tagSel'), sm('blockSwap')] },
    { name: 'Modify', items: [big('move'), sm('copy'), sm('rotate'), big('trim', true), sm('fillet', true), sm('array', true), sm('mirror'), sm('select'), sm('offset'), sm('extrude'), sm('stretch'), sm('cube'), sm('scale'), sm('breakAt', true), sm('join'), sm('swap'), sm('extract'), sm('purge')] },
    { name: 'Text', items: [big('textA'), big('textBrush'), sm('textLine'), sm('spell'), sm('textStyle'), sm('pdfText'), sm('textAlign'), sm('textFind'), sm('textUpdate'), sm('pdfSet')] },
    { name: 'Dimension', items: [big('dim'), big('dimBrush'), sm('dimLinear', true), sm('dimRadius', true), sm('dimBreak'), sm('dimSpace'), sm('dimCont', true), sm('tolerance'), sm('dimCheck'), sm('dimX', true)] },
    { name: 'Leader', items: [big('leader'), big('leaderBrush'), sm('leaderAdd'), sm('leaderAlign'), sm('leaderBolt'), null, sm('leaderDel'), sm('leaderCollect')] },
    { name: 'Table', items: [big('table'), big('tableLink'), sm('tableStyle'), sm('tableSync'), null, null, sm('tableDown')] },
    { name: 'Parametric', items: [big('param', true), sm('autoConstrain'), sm('showAll'), big('dimLock', true), sm('paramConv'), sm('dShow'), sm('showSome'), sm('hideAll'), sm('dSome'), sm('dHide')] },
    { name: 'New Panel', items: [] }
  ];
  const toolbar = [
    ['new', 'open', 'save', 'saveAs'],
    ['undo', 'redo'],
    ['print', 'printTo', 'pageSet', 'pageEdit'],
    ['importF', 'exportF', 'attach', 'web', 'compare'],
    ['zoomWin', 'pan', 'orbit'],
    ['match', 'quick', 'plot', 'geo', 'clean'],
    ['sheet1', 'sheet2']
  ];
  const status = [
    { k: 'infer' }, { k: 'dynDim' }, { k: 'gridOn', on: true }, { k: 'snap' }, { k: 'ortho', on: true }, { k: 'polar' }, { k: 'dynIn' },
    { k: 'weight' }, { k: 'transp', on: true }, { k: 'cycle' }, { k: 'angle' }, { k: 'osnap', on: true }, { k: 'osnap3' },
    { k: 'ucsBulb', more: true }, { k: 'ucsBolt' }, { k: 'annoTag', more: true }, { k: 'annoVis', on: true }, { k: 'annoAuto' },
    { k: 'annoScale', label: '1:1', more: true }, { k: 'workspace', more: true }, { k: 'isoWire' }, { k: 'isoObj' }, { k: 'surf' }, { k: 'surf2' }, { k: 'shapes' }, { k: 'settings' }
  ];
  const layerTools = ['lyMake', 'lyMatch', 'lyPrev', 'lyIso', 'lyUniso', 'lyFreeze', 'lyOff', 'lyLock', 'lyUnlock'];
  const layers = [
    ['0', 'white', true], ['3D_EXTRUÇÃO', 'cyan', true], ['3D_FACE', 'magenta', true], ['3D_LOFT', 'violet', true], ['3D_RULESURF', 'salmon', true],
    ['3D_SWEEP', 'yellow', true], ['AUXILIAR I', 'yellow', true], ['AUXILIAR II', 'red', false], ['AUXILIAR III', 'green', false]
  ];
  const props = [
    { l: 'Color', v: 'ByLayer', t: 'color' }, { l: 'Layer', v: '3D_RULESURF' }, { l: 'Linetype', v: 'ByLayer', t: 'linetype' },
    { l: 'Linetype scale', v: '1', t: 'text' }, { l: 'Lineweight', v: 'ByLayer' }, { l: 'Transparency', v: '0', t: 'transparency' },
    { l: 'Text style', v: 'Standard' }, { l: 'Dimension style', v: 'ISO–25' }, { l: 'Multileader style', v: 'Standard' },
    { l: 'Table style', v: 'Standard' }, { l: 'Annotation scale', v: '1:1' }, { l: 'Text height', v: '2.5', t: 'height' },
    { l: 'Plot style', v: 'ByColor' }, { l: 'Plot style table', v: 'None' }
  ];

  // ---------- model geometry ----------
  // Every contour is the base ellipse widened by an isometric circle (dx, dy).
  function outline(cy, dx, dy) {
    const sxx = 405 * 405, syy = 229 * 229, sxy = 183 * 229;
    let d = '';
    for (let i = 0; i < 180; i++) {
      const t = (i * Math.PI) / 90, ux = Math.cos(t) * 0.6, uy = Math.sin(t);
      const ax = sxx * ux + sxy * uy, ay = sxy * ux + syy * uy, n = Math.sqrt(ux * ax + uy * ay);
      const m = Math.sqrt(ux * ux * dx * dx + uy * uy * dy * dy) || 1;
      const sg = Math.sign(dx) || 1;
      const x = 1337 + ax / n + (sg * dx * dx * ux) / m, y = cy + ay / n + (sg * dy * dy * uy) / m;
      d += (i ? 'L' : 'M') + x.toFixed(1) + ' ' + y.toFixed(1);
    }
    return d + 'Z';
  }
  const rings = [4, 3, 2, 1, 0].map((k) => {
    const cy = 765 + 44 * k, dx = 54 * k, dy = 31 * k;
    return {
      top: outline(cy, dx, dy),
      back: outline(cy - 8, dx, dy),
      lip: outline(cy + (k === 4 ? 24 : 12), dx, dy),
      wall: k === 4 ? outline(1065, 92, 53) : outline(cy + 49, dx - 22, dy - 11)
    };
  });
  const hole = outline(770, -59, -29);
  const inner = [[26, 'olive'], [110, 'yell'], [140, 'olive'], [186, 'yell'], [216, 'olive'], [261, 'yell'], [292, 'olive']].map(([s, c]) => ({ d: outline(770 + s, -59, -29), c }));
  const major = [], minor = [];
  for (let i = -18; i < 27; i++) {
    const c = -682 + 87.9 * i;
    (i % 5 === 0 ? major : minor).push(`M370 ${c + 213.6}L2346 ${c + 1354.5}`);
    const e = 1658 + 87.9 * i;
    (i % 5 === 0 ? major : minor).push(`M370 ${e - 213.6}L2346 ${e - 1354.5}`);
  }
</script>

{#snippet icon(k, w, h, cls)}
  <svg class="ic {cls}" viewBox="0 0 {w} {h}" aria-hidden="true">{@html icons[k]}</svg>
{/snippet}

{#snippet gear()}
  <svg class="gear" viewBox="0 0 42 42" aria-hidden="true"><path fill-rule="evenodd" d={gearD} /></svg>
{/snippet}

<svg class="defs" aria-hidden="true">
  <defs>
    <clipPath id="hatch-clip"><rect x="12" y="12" width="40" height="40" /></clipPath>
    <linearGradient id="blue-fade" x1="0" y1="0" x2="0" y2="1"><stop offset="0" stop-color="#7cc6ff" /><stop offset="1" stop-color="#414b5a" /></linearGradient>
  </defs>
</svg>

<div class="app">
  <header class="toolbar">
    {#each toolbar as group}
      <div class="group">
        {#each group as k}
          <button class="tool" aria-label={k}>{@render icon(k, 36, 32, 'i-tool')}</button>
        {/each}
      </div>
    {/each}
  </header>

  <div class="work">
    <aside class="sidebar">
      <div class="side-tabs">
        <button class="side-tab on">Drafting</button>
        <button class="side-tab">Modeling</button>
        <button class="collapse" aria-label="Collapse">
          <svg viewBox="0 0 14 10"><path d="M6 1L1 5L6 9M13 1L8 5L13 9" /></svg>
        </button>
      </div>
      {#each sections as s}
        <section class="panel">
          <h2>
            <svg class="tw" viewBox="0 0 16 8" aria-hidden="true"><path d="M0 0H16L8 8Z" /></svg>
            <span>{s.name}</span>
            <button aria-label="{s.name} settings">{@render gear()}</button>
          </h2>
          {#if s.items.length}
            <div class="tools" class:three={['Draw', 'Block', 'Modify'].includes(s.name)}>
              {#each s.items as it}
                {#if it}
                  <button class:big={it.big} class:fly={it.fly} aria-label={it.k}>
                    {#if it.big}{@render icon(it.k, 64, 64, 'i-big')}{:else}{@render icon(it.k, 32, 32, 'i-small')}{/if}
                  </button>
                {:else}
                  <span></span>
                {/if}
              {/each}
            </div>
          {/if}
        </section>
      {/each}
      <div class="side-foot">
        <button aria-label="Add panel"><svg viewBox="0 0 26 22"><path d="M13 0V22M2 11H24" /></svg></button>
        <button aria-label="Panel list"><svg viewBox="0 0 26 22"><path d="M5 2H26M5 8H26M5 20H26M0 14H18" /><path class="up" d="M20 15L23 12L26 15Z" /></svg></button>
      </div>
    </aside>

    <div class="right">
      <div class="upper">
        <main class="center">
          <nav class="doc-tabs">
            <button class="tiles" aria-label="Start">{@render icon('tiles', 28, 29, 'i-tiles')}</button>
            <button class="plus" aria-label="New drawing"><svg viewBox="0 0 22 22"><path d="M11 0V22M0 11H22" /></svg></button>
            <button class="doc">AnalinWroo…n_11.03.22*</button>
          </nav>
          <div class="viewport">
            <svg class="scene" viewBox="370 126 1974 1570" preserveAspectRatio="xMidYMid slice" role="img" aria-label="Model view">
              <defs>
                <clipPath id="hole-clip"><path d={hole} /></clipPath>
                <linearGradient id="face" x1="0" y1="0" x2="0" y2="1"><stop offset="0" stop-color="#b4b5b6" /><stop offset="1" stop-color="#8b8c8e" /></linearGradient>
                <linearGradient id="bar-g" x1="0" y1="1" x2="0.6" y2="0"><stop offset="0" stop-color="#2f8a35" /><stop offset="0.6" stop-color="#67c765" /><stop offset="1" stop-color="#3c9640" /></linearGradient>
                <linearGradient id="bar-r" x1="0.3" y1="0" x2="0.8" y2="1"><stop offset="0" stop-color="#8e3b3b" /><stop offset="0.5" stop-color="#b65a5a" /><stop offset="1" stop-color="#8e3b3b" /></linearGradient>
                <linearGradient id="bar-b"><stop offset="0" stop-color="#2a4f86" /><stop offset="0.6" stop-color="#43689f" /><stop offset="1" stop-color="#2a4f86" /></linearGradient>
              </defs>
              <path class="minor" d={minor.join('')} />
              <path class="major" d={major.join('')} />

              {#each rings as r}
                <path class="yell" d={r.wall} />
                <path class="yell" d={r.lip} />
                <path class="yell" d={r.back} />
                <path class="olive edge" d={r.top} />
              {/each}
              <g clip-path="url(#hole-clip)">
                <path class="yell" d={hole} />
                <path class="olive" d={inner[0].d} />
                <g transform="translate(700 500) scale(.816 .561)">
                  <path class="thread" d="M372 305C410 225 500 203 560 205C700 212 850 290 970 385C1080 470 1150 560 1175 640" />
                  <path class="thread" d="M380 285C430 242 500 226 560 229C680 236 820 288 915 358" />
                  <path class="thread" d="M382 292C440 258 500 250 560 253C700 260 850 320 960 395C1060 470 1130 545 1165 610" />
                  <path class="sliver" d="M860 312C980 385 1110 500 1168 622C1120 560 1050 470 960 400Z" />
                </g>
                {#each inner.slice(1) as b}<path class={b.c} d={b.d} />{/each}
                <g class="speck" transform="translate(700 500) scale(.816 .561)">
                  <path d="M545 172L552 158H588L596 172ZM632 178L640 152L668 160L676 188ZM715 202L722 190L745 198L752 213ZM405 182L425 168L430 174L412 186ZM460 158L478 146V154Z" />
                  <path d="M418 362L430 345L460 343L448 362ZM420 388L428 370L446 366L438 388ZM560 342L570 334L620 340L630 346L600 358L575 352ZM652 380L668 345L716 355L712 396ZM758 402L766 370L808 388L814 425ZM862 440L865 412L896 425L906 470ZM940 460L975 470L1008 505L958 500Z" />
                  <path d="M438 500L448 486L478 478L462 512ZM512 474L540 468L526 486ZM545 506L556 490H595L606 508ZM642 515L655 480L696 488L690 524ZM738 540L745 503L776 512L784 556ZM832 580L834 545L856 552L866 594ZM560 640L566 626L592 630L594 640ZM632 648L642 622L668 634L674 655ZM715 675L722 660L742 668L750 682ZM898 725L915 732L920 746Z" />
                </g>
              </g>
              <path class="rim" d={hole} />
              <path class="rim" d="M1186 874L1152 892M1146 929L1108 949M1110 992L1068 1014M1072 1056L1030 1079M1033 1122L994 1146" />

              <g transform="translate(2000 180) scale(.3333)">
                <path class="ring" fill-rule="evenodd" d="M165 500A387 245 0 1 0 939 500A387 245 0 1 0 165 500ZM262 488A293 180 0 1 1 848 488A293 180 0 1 1 262 488Z" />
                <text class="dir" transform="translate(318 362) rotate(-62) skewX(-30)" font-size="84">N</text>
                <text class="dir" transform="translate(790 362) rotate(-34) skewX(38)" font-size="72">E</text>
                <text class="dir" transform="translate(258 700) rotate(-35) skewX(-12)" font-size="122">W</text>
                <text class="dir" transform="translate(766 640) rotate(26) skewX(26)" font-size="128">S</text>
                <path class="top" d="M552 106L760 209L552 330L344 209Z" />
                <path fill="url(#face)" d="M344 209L552 330V571L359 440Z" />
                <path fill="url(#face)" d="M760 209L552 330V571L746 440Z" />
                <path class="corner" d="M510 308L552 284L594 308V352L552 376L510 352Z" />
                <path class="cedge" d="M344 209L552 330L760 209M552 330V571" />
                <text class="ftext" transform="matrix(.87 -.5 .87 .5 527 243)" font-size="56">TOP</text>
                <text class="ftext" transform="matrix(.82 .48 0 1 400 386)" font-size="56">LEFT</text>
                <text class="ftext" transform="matrix(.82 -.5 0 1 584 459)" font-size="54">FRONT</text>
              </g>

              <g>
                <path fill="url(#bar-g)" d="M397 1556L403 1549L470 1584V1597H464Z" />
                <path fill="url(#bar-r)" d="M541 1556L535 1549L469 1584V1597H475Z" />
                <path fill="url(#bar-b)" d="M463 1515H475V1594L469 1597L463 1594Z" />
                <ellipse cx="469" cy="1515" rx="6" ry="4" fill="#5f93dd" />
                <text class="axis ax" x="533" y="1544">X</text>
                <text class="axis ay" x="394" y="1544">Y</text>
                <text class="axis az" x="466" y="1506">Z</text>
              </g>

              <g class="cross">
                <path class="cb" d="M2215 1303V1385M2215 1395V1433" />
                <path class="cg" d="M2140 1346L2210 1387M2220 1392L2254 1411" />
                <path class="cr" d="M2178 1411L2210 1393M2220 1387L2290 1348" />
                <path class="cw" d="M2210 1385H2220V1395H2210Z" />
              </g>
            </svg>

            <div class="vp-controls">
              <button class="vp-plus">+</button><button>SW Isometric</button><button>FlatWithEdges</button>
            </div>
            <button class="wcs">WCS <svg viewBox="0 0 18 11"><path d="M1 1H17L9 10Z" /></svg></button>

            <div class="command">
              <div class="history">
                <p>Automatic save to /tmp/AnalinWrooman_11.03.22_1_2009464909_1750f728.sv$ ...</p>
                <p>Command:</p>
                <p>Command: _u '.VIEWCUBEACTION</p>
                <i class="thumb"></i>
              </div>
              <button class="prompt" aria-label="Recent commands">
                <svg viewBox="0 0 44 20"><path class="s" d="M1 1L9 6L1 11M15 17H27" /><path d="M31 5H43L37 12Z" /></svg>
              </button>
              <div class="cmd-in">
                <input aria-label="Command" placeholder="Type a command" />
                <svg viewBox="0 0 12 8"><path d="M0 0H12L6 8Z" /></svg>
              </div>
            </div>
          </div>
        </main>

        <aside class="dock">
          <div class="dock-tabs">
            <button class="on" aria-label="Layers">{@render icon('layersInfo', 32, 32, 'i-small')}</button>
            <button aria-label="References">{@render icon('refs', 32, 32, 'i-small')}</button>
            <button aria-label="Palette">{@render icon('palette', 32, 32, 'i-small')}</button>
            <span></span>
            <button class="more" aria-label="Collapse"><svg viewBox="0 0 14 10"><path d="M1 1L6 5L1 9M8 1L13 5L8 9" /></svg></button>
          </div>

          <section class="layers">
            <div class="title"><h3>Layers</h3><button aria-label="Dock layers">{@render icon('dock', 24, 30, 'i-dock')}</button></div>
            <div class="layer-tools">
              {#each layerTools as k}<button aria-label={k}>{@render icon(k, 32, 32, 'i-small')}</button>{/each}
            </div>
            <div class="combo current">
              <span class="marks">
                <i class="dot"></i>
                <svg class="ic dim i-lock" viewBox="0 0 20 20">{@html icons.padlock}</svg>
                <svg class="ic dim i-lock" viewBox="0 0 20 20">{@html icons.snow}</svg>
                <i class="sw salmon"></i>
              </span>
              <select aria-label="Current layer"><option>3D_RULESURF</option></select>
            </div>
            <div class="combo state"><select aria-label="Layer state"><option>Unsaved Layer State</option></select></div>
            <button class="hide"><svg viewBox="0 0 16 10"><path d="M1 1L8 8L15 1" /></svg>Hide Layer List</button>

            <div class="list">
              <div class="clip">
                <table>
                  <thead>
                    <tr>
                      <th class="c-eye"><svg viewBox="0 0 24 16"><path class="e" d="M1 8Q12 -5 23 8Q12 21 1 8Z" /><circle cx="12" cy="8" r="4" /></svg></th>
                      <th class="c-name">
                        <span><svg class="half" viewBox="0 0 16 16"><path class="e" d="M1 1H15V15H1Z" /><path d="M15 1V15H1Z" /></svg>Name<svg class="sort" viewBox="0 0 10 18"><path d="M5 0L10 7H0ZM5 18L10 11H0Z" /></svg></span>
                      </th>
                      <th class="c-ico"><svg class="ic i-lock" viewBox="0 0 20 20">{@html icons.snow}</svg></th>
                      <th class="c-ico"><svg class="ic i-lock" viewBox="0 0 20 20">{@html icons.padlock}</svg></th>
                      <th class="c-last"><svg viewBox="0 0 7 14"><path class="e" d="M0 1H7M0 7H7M0 13H7" /></svg></th>
                    </tr>
                  </thead>
                  <tbody>
                    {#each layers as [name, color, on]}
                      <tr class:sel={name === '3D_RULESURF'}>
                        <td class="c-eye"><i class="half-dot" class:off={!on}></i></td>
                        <td class="c-name"><span><i class="sw {color}"></i>{name}</span></td>
                        <td></td>
                        <td></td>
                        <td class="c-last">D..</td>
                      </tr>
                    {/each}
                  </tbody>
                </table>
                <i class="sortmark"></i>
              </div>
              <div class="vbar"><i></i></div>
              <div class="hbar"><i></i></div>
              <div class="whitebox"></div>
            </div>

            <div class="list-tools">
              <button aria-label="New layer">{@render icon('stack', 28, 28, 'i-28')}</button>
              <button aria-label="Layer properties">{@render icon('stackProps', 30, 30, 'i-30')}</button>
              <button aria-label="New group">{@render icon('folder', 28, 28, 'i-28')}</button>
              <button aria-label="New dynamic group">{@render icon('folderBolt', 28, 28, 'i-28')}</button>
              <button class="minus" aria-label="Delete layer"><i></i></button>
              <button class="cols" aria-label="Columns">{@render icon('columns', 22, 24, 'i-cols')}<svg class="car" viewBox="0 0 10 7"><path d="M0 0H10L5 7Z" /></svg></button>
            </div>
            <label class="search">
              <svg viewBox="0 0 36 28"><circle cx="11" cy="11" r="10" /><path d="M18 18L25 26M24 11L29 16L35 10" /></svg>
              <input type="search" aria-label="Search for layer" placeholder="Search for layer" />
            </label>
          </section>

          <section class="props">
            <div class="title">
              <h3>Properties</h3>
              <div class="seg"><button>All</button><button class="on">My</button></div>
              <button class="ed" aria-label="Edit list">{@render icon('editList', 30, 30, 'i-28')}</button>
              <button aria-label="Dock properties">{@render icon('dock', 24, 30, 'i-dock')}</button>
            </div>
            <div class="combo space"><select aria-label="Selection" disabled><option>Model Space</option></select></div>
            <div class="rows">
              {#each props as p, i}
                <label for="p{i}">{p.l}</label>
                {#if p.t === 'text'}
                  <input id="p{i}" class="field" value={p.v} />
                {:else if p.t === 'height'}
                  <div class="split h"><input id="p{i}" class="field" value={p.v} /><button aria-label="Annotative">{@render icon('pickAnnot', 32, 32, 'i-pick')}</button></div>
                {:else if p.t === 'transparency'}
                  <div class="split t"><input id="p{i}" class="field num" value={p.v} /><i class="tick"></i><button aria-label="Transparency mode">{@render icon('layerStack', 30, 24, 'i-stack')}<svg class="car" viewBox="0 0 10 7"><path d="M0 0H10L5 7Z" /></svg></button></div>
                {:else}
                  <div class="combo small {p.t ?? ''}">
                    {#if p.t === 'color'}<i class="sw salmon"></i>{:else if p.t === 'linetype'}<i class="rule"></i>{/if}
                    <select id="p{i}"><option>{p.v}</option></select>
                  </div>
                {/if}
              {/each}
            </div>
          </section>
        </aside>
      </div>

      <nav class="layout-tabs">
        <button class="on">Model</button>
        <button class="plus" aria-label="New layout"><svg viewBox="0 0 22 22"><path d="M11 0V22M0 11H22" /></svg></button>
        <button>Layout1</button>
        <button>Layout2</button>
      </nav>
      <footer class="status">
        <span class="coords">659.6508, 135.0204, 0.0000</span>
        {#each status as s}
          <button class:on={s.on} class:wide={s.more} aria-label={s.k}>
            {@render icon(s.k, 42, 42, 'i-42')}
            {#if s.label}<span>{s.label}</span>{/if}
            {#if s.more}<svg class="car" viewBox="0 0 12 8"><path d="M0 0H12L6 8Z" /></svg>{/if}
          </button>
        {/each}
      </footer>
    </div>
  </div>
</div>

<style>
  :global(body) { margin: 0; background: #212830; }
  .app { display: flex; flex-direction: column; min-height: 100vh; font-family: 'Noto Sans', 'Open Sans', sans-serif; color: #dcdcdc; background: #222932; font-size: 22px; }
  .app, .app * { box-sizing: border-box; }
  button { border: 0; padding: 0; margin: 0; background: none; color: inherit; font: inherit; display: flex; align-items: center; justify-content: center; }
  h2, h3, p { margin: 0; font-weight: 400; }
  i { display: block; }
  svg { display: block; flex: none; overflow: visible; }
  .defs { position: absolute; width: 0; height: 0; }

  .ic :global(.sw), .ic :global(.sb), .ic :global(.sg), .ic :global(.so), .ic :global(.sr), .ic :global(.st), .ic :global(.sp), .ic :global(.sn), .ic :global(.sm), .ic :global(.sh), .ic :global(.si), .ic :global(.sy), .ic :global(.sk) { fill: none; }
  .ic :global(.sw), .ic :global(.swx) { stroke: #dcdcdc; }
  .ic :global(.sb), .ic :global(.sbx) { stroke: #75c1fb; }
  .ic :global(.sg) { stroke: #63d68b; }
  .ic :global(.so) { stroke: #f7b088; }
  .ic :global(.sr) { stroke: #e56f6f; }
  .ic :global(.st) { stroke: #76dbe5; }
  .ic :global(.sp) { stroke: #fff; }
  .ic :global(.sn) { stroke: #d6a777; }
  .ic :global(.sy) { stroke: #ffd384; }
  .ic :global(.sm) { stroke: #6b727d; }
  .ic :global(.sh) { stroke: #9b9ea2; }
  .ic :global(.si) { stroke: #2a8ceb; }
  .ic :global(.sk) { stroke: #3b4554; }
  .ic :global(.fw) { fill: #dadada; }
  .ic :global(.fb) { fill: #75c1fb; }
  .ic :global(.fc) { fill: #8accfa; }
  .ic :global(.fg) { fill: #73d79a; }
  .ic :global(.fo) { fill: #f7b088; }
  .ic :global(.fr) { fill: #f9686c; }
  .ic :global(.ft) { fill: #76dbe5; }
  .ic :global(.fp) { fill: #f8f8f8; }
  .ic :global(.fn) { fill: #d9aa79; }
  .ic :global(.fy) { fill: #ffd384; }
  .ic :global(.fm) { fill: #6b727d; }
  .ic :global(.fh) { fill: #b0b1b3; }
  .ic :global(.fk) { fill: #3b4554; }
  .ic :global(.fd) { fill: #2d3341; }
  .ic :global(.outline) { stroke: #3b4554; stroke-width: 2; }
  .ic :global(.badge) { fill: #f86f38; stroke: #fff; }
  .ic :global(.solid *) { fill: #fff; }
  .ic :global(.glyph) { font-family: Inter, 'Liberation Sans', sans-serif; }
  .dim { opacity: 0.18; }
  .i-tool { width: 36px; height: 32px; }
  .i-big { width: 64px; height: 64px; }
  .i-small { width: 32px; height: 32px; }
  .i-28 { width: 28px; height: 28px; }
  .i-30 { width: 30px; height: 30px; }
  .i-42 { width: 42px; height: 42px; }
  .i-dock { width: 22px; height: 28px; }
  .i-tiles { width: 28px; height: 29px; }
  .i-lock { width: 20px; height: 20px; }
  .i-cols { width: 22px; height: 24px; }
  .i-pick { width: 32px; height: 32px; }
  .i-stack { width: 28px; height: 22px; }
  .car { width: 12px; height: 8px; fill: #d0d0d0; }

  .toolbar { display: flex; justify-content: center; align-items: center; gap: 78px; height: 82px; padding: 24px 6px 12px 0; background: #d3d7da; border-bottom: 2px solid #0b0f14; }
  .group { display: flex; gap: 2px; }
  .tool { width: 64px; height: 40px; border-radius: 4px; background: #3b4555; }

  .work { flex: 1; display: flex; gap: 2px; min-height: 0; }
  .sidebar { width: 368px; flex: none; background: #3b4452; display: flex; flex-direction: column; font-family: 'Liberation Sans', Arial, sans-serif; color: #f4f4f4; }
  .side-tabs { display: flex; height: 44px; flex: none; }
  .side-tab { width: 161px; padding-top: 3px; font-size: 24px; border: solid #222932; border-width: 0 2px 2px 0; background: #2e3440; color: #a3a6ab; }
  .side-tab.on { background: none; color: #f4f4f4; border-bottom-color: transparent; }
  .collapse { flex: 1; border-bottom: 2px solid #222932; }
  .collapse svg, .more svg { width: 14px; height: 10px; fill: none; stroke: #a9adb3; stroke-width: 2; }
  .panel { margin: 0 8px; border-bottom: 2px solid #222932; }
  .panel h2 { display: flex; align-items: center; height: 42px; padding: 3px 2px 0 0; font-size: 20px; }
  .tw { width: 16px; height: 8px; fill: #fff; margin-right: 10px; }
  .panel h2 span { flex: 1; }
  .gear { width: 19px; height: 19px; fill: #f1f1f1; }
  .tools { display: grid; grid-template-columns: repeat(8, 1fr); grid-template-rows: 44px 44px; padding-bottom: 12px; }
  .tools.three { grid-template-rows: 44px 44px 48px; }
  .tools button { position: relative; height: 44px; align-self: end; }
  .tools .big { grid-column: span 2; grid-row: span 2; height: 88px; }
  .fly::after { content: ''; position: absolute; right: 0; bottom: 0; width: 8px; height: 8px; background: linear-gradient(135deg, transparent 50%, #9a9b9d 50%); }
  .big.fly::after { right: 2px; bottom: 2px; }
  .side-foot { margin-top: auto; display: flex; gap: 20px; padding: 0 0 11px 29px; }
  .side-foot svg { width: 26px; height: 22px; fill: none; stroke: #dcdcdc; stroke-width: 2; margin-right: 13px; }
  .side-foot .up { fill: #dcdcdc; stroke: none; }

  .right { flex: 1; min-width: 0; display: flex; flex-direction: column; gap: 2px; padding-bottom: 2px; }
  .upper { flex: 1; display: flex; gap: 2px; min-height: 0; }
  .center { flex: 1; min-width: 0; display: flex; flex-direction: column; }
  .doc-tabs { display: flex; gap: 2px; height: 44px; background: #3b4555; }
  .doc-tabs button { border-right: 2px solid #222932; }
  .tiles { width: 46px; }
  .plus { width: 44px; }
  .plus svg { width: 22px; height: 22px; stroke: #dcdcdc; stroke-width: 2; }
  .doc { width: 302px; padding-left: 6px; justify-content: flex-start; background: #4c5a70; color: #fff; font-family: 'Liberation Sans', Arial, sans-serif; font-size: 21px; }
  .viewport { position: relative; flex: 1; background: #212830; overflow: hidden; }
  .scene { position: absolute; inset: 0; width: 100%; height: 100%; overflow: hidden; }
  .minor { stroke: #272e3a; fill: none; stroke-width: 1; }
  .major { stroke: #353c4b; fill: none; stroke-width: 1; }
  .yell, .sliver { fill: #ff0; }
  .olive { fill: #a8a800; }
  .edge { stroke: #ff0; stroke-width: 3; }
  .rim { fill: none; stroke: #ff0; stroke-width: 2; }
  .thread { fill: none; stroke: #ff0; stroke-width: 6; }
  .speck { fill: #8c8c00; }
  .ring { fill: #4a4f57; }
  .dir { fill: #b2b4b6; font-family: 'Liberation Sans', Arial, sans-serif; font-weight: 700; }
  .top { fill: #b1b2b3; }
  .corner { fill: #9aa0a8; }
  .cedge { fill: none; stroke: #6a6c6f; stroke-width: 4; }
  .ftext { fill: #4a5058; font-family: 'Open Sans', 'Noto Sans', sans-serif; font-weight: 700; }
  .axis { font-family: Inter, Lato, sans-serif; font-weight: 100; font-size: 32px; }
  .ax { fill: #e02b2b; }
  .ay { fill: #19c019; }
  .az { fill: #1565ee; }
  .cross path { fill: none; stroke-width: 1; }
  .cross .cb { stroke: #5a5aff; }
  .cross .cg { stroke: #7fcf7f; }
  .cross .cr { stroke: #d25a5a; }
  .cross .cw { stroke: #fff; }
  .vp-controls { position: relative; display: flex; padding: 10px 0 0 30px; color: #9b9c9e; }
  .vp-controls button { height: 30px; padding: 0 16px 0 11px; border-left: 2px solid #85888c; font-size: 23px; }
  .vp-controls .vp-plus { padding: 0; width: 38px; justify-content: flex-start; border: 0; }
  .wcs { position: absolute; right: 110px; top: 342px; width: 100px; height: 24px; border-radius: 7px; background: #67737b; color: #222932; font-family: Inter, sans-serif; font-size: 22px; gap: 16px; }
  .wcs svg { width: 18px; height: 11px; fill: #92a5ab; stroke: #222932; stroke-width: 1; }
  .command { position: absolute; left: 487px; bottom: 2px; width: 998px; display: grid; grid-template-columns: 76px 1fr; gap: 2px; color: #b4b8bc; font-size: 20px; }
  .history { grid-column: 2; position: relative; padding: 11px 8px 0; height: 99px; background: #3b4555; overflow: hidden; }
  .history p { line-height: 30px; white-space: nowrap; }
  .thumb { position: absolute; right: 8px; bottom: 2px; width: 8px; height: 40px; border-radius: 4px; background: #999da3; }
  .prompt, .cmd-in { height: 46px; background: #3b4555; }
  .prompt svg { width: 44px; height: 20px; fill: #b4b8bc; }
  .prompt .s { fill: none; stroke: #b4b8bc; stroke-width: 2; }
  .cmd-in { display: flex; align-items: center; padding: 0 8px 2px 0; }
  .cmd-in svg { width: 12px; height: 8px; fill: #a3a7ac; }
  input { min-width: 0; font: inherit; color: inherit; background: none; border: 0; outline: 0; }
  .cmd-in input { flex: 1; padding: 0 8px; font-size: 22px; font-style: italic; }
  .cmd-in input::placeholder { color: #949a9f; opacity: 1; }

  .dock { width: 534px; flex: none; background: #3a4554; display: flex; flex-direction: column; }
  .dock-tabs { display: flex; height: 46px; }
  .dock-tabs button, .dock-tabs span { width: 105px; background: #2d3341; border: solid #222932; border-width: 0 2px 2px 0; }
  .dock-tabs .on { background: none; border-bottom-color: transparent; }
  .dock-tabs span { flex: 1; }
  .dock-tabs .more { width: 48px; background: none; border-right: 0; }
  .title { display: flex; align-items: center; }
  .title h3 { flex: 1; font-family: Inter, 'Liberation Sans', sans-serif; font-size: 23px; color: #eee; }
  .layers { padding: 0 16px 18px 20px; border-bottom: 2px solid #222932; }
  .layers .title { height: 36px; padding-right: 6px; }
  .layer-tools { display: flex; justify-content: space-between; padding: 29px 43px 23px 39px; }
  .combo { position: relative; display: flex; align-items: center; height: 50px; border: 2px solid #2c3c40; border-radius: 4px; background: #4f5b6e; color: #fff; }
  .combo::after { content: ''; position: absolute; right: 8px; top: 50%; margin-top: -4px; border: solid transparent; border-width: 8px 6px 0; border-top-color: #d8d8d8; pointer-events: none; }
  select { appearance: none; flex: 1; align-self: stretch; min-width: 0; padding: 0 24px 2px 11px; border: 0; background: none; color: inherit; font: inherit; outline: 0; opacity: 1; }
  .combo.state { margin: 6px 2px 0; }
  .marks { display: flex; align-items: center; gap: 14px; padding-left: 20px; }
  .dot { width: 17px; height: 17px; border-radius: 50%; background: #d8d8d8; }
  .sw { width: 18px; height: 18px; flex: none; border: 2px solid #000; }
  .current select { padding-left: 26px; }
  .white { background: #fff; }
  .cyan { background: #0ff; }
  .magenta { background: #ff4dff; }
  .violet { background: #b19dff; }
  .salmon { background: #ffab90; }
  .yellow { background: #ffff33; }
  .red { background: #ff2a1a; }
  .green { background: #00ff26; }
  .hide { height: 56px; padding: 0 0 2px 8px; gap: 25px; color: #c6c9cc; }
  .hide svg { width: 16px; height: 10px; fill: none; stroke: #c6c9cc; stroke-width: 2; }
  .list { display: grid; grid-template-columns: 1fr 30px; margin-right: 4px; }
  .clip { position: relative; height: 377px; overflow: hidden; background: #4e596c; }
  table { width: 100%; table-layout: fixed; border-collapse: collapse; }
  th, td { padding: 0; height: 38px; text-align: left; font-weight: 400; color: #fff; overflow: hidden; white-space: nowrap; }
  th { height: 46px; background: #2d3341; border: solid #272d39; border-width: 2px 2px 2px 0; color: #dcdcdc; }
  td { padding-bottom: 2px; line-height: 34px; }
  th svg { fill: #dcdcdc; }
  th .e { fill: none; stroke: #dcdcdc; stroke-width: 2; }
  .c-eye { width: 30px; }
  .c-eye svg { width: 24px; height: 16px; margin-left: -10px; }
  th.c-name { background: #4e5a6f; font-weight: 700; color: #d9dadc; }
  .c-name span { display: flex; align-items: center; }
  td.c-name span { gap: 19px; padding-left: 4px; }
  th.c-name span { padding: 0 14px 0 8px; gap: 14px; }
  .half { width: 16px; height: 16px; }
  .sort { width: 10px; height: 18px; margin-left: auto; }
  th.c-ico { width: 44px; }
  th.c-ico svg { margin: 0 auto; }
  .c-last { width: 44px; }
  th.c-last { border-right: 0; }
  th.c-last svg { width: 7px; height: 14px; margin-left: auto; }
  td.c-last { text-align: right; }
  .half-dot { width: 17px; height: 17px; margin-left: -7px; border-radius: 50%; background: #d8d8d8; }
  .half-dot.off { background: none; border: 2px solid #667285; }
  .sel td { background: #8e9fae; }
  .sortmark { position: absolute; left: 174px; top: 36px; border: solid transparent; border-width: 0 6px 10px; border-bottom-color: #3798ee; }
  .vbar { padding: 52px 8px 0 12px; }
  .vbar i { height: 157px; border-radius: 5px; background: #8a919b; }
  .hbar { padding: 8px 131px 0 21px; }
  .hbar i { height: 14px; border-radius: 7px; background: #8a919b; }
  .whitebox { height: 30px; background: #fafafa; }
  .list-tools { display: flex; align-items: center; height: 50px; padding: 0 14px 2px 16px; gap: 31px; }
  .minus { margin-left: auto; }
  .minus i { width: 16px; height: 4px; background: #868d97; }
  .cols { gap: 6px; margin-left: 2px; }
  .search { display: flex; align-items: center; height: 40px; margin: 0 6px 0 2px; padding: 0 9px; gap: 6px; border-radius: 8px; background: #fff; color: #333; font-family: Inter, 'Liberation Sans', sans-serif; font-size: 25px; }
  .search svg { width: 36px; height: 28px; fill: none; stroke: #222; stroke-width: 2; }
  .search input { flex: 1; padding: 0 3px; appearance: none; }
  .search input::placeholder { color: #bcbcbc; opacity: 1; }

  .props { padding: 0 18px 0 20px; }
  .props .title { height: 50px; padding-right: 2px; align-items: flex-start; }
  .props h3 { padding-top: 4px; }
  .seg { display: flex; border: 2px solid #2b323e; border-top: 0; margin-right: 20px; font-size: 20px; }
  .seg button { width: 54px; height: 24px; color: #8d949d; }
  .seg .on { width: 62px; background: #4f5b6e; color: #fff; border-left: 2px solid #2b323e; }
  .ed { margin-right: 20px; }
  .space { height: 44px; margin: 0 4px 0 2px; border-color: #37424f; background: #414c5e; color: #7f8793; }
  .space::after { border-top-color: #7f8793; }
  .rows { display: grid; grid-template-columns: 1fr 257px; column-gap: 18px; row-gap: 8px; padding: 14px 9px 0 0; align-items: center; }
  .rows label { display: flex; justify-content: flex-end; min-width: 0; line-height: 32px; padding-bottom: 2px; white-space: nowrap; color: #d0d2d4; font-size: 23px; }
  .small { height: 38px; }
  .field { width: 100%; height: 38px; padding: 0 8px; border: 2px solid #2c3c40; border-radius: 4px; background: #4f5b6e; color: #fff; }
  .small, .field, .state, .current { font-weight: 500; }
  .color .sw { margin-left: 18px; height: 18px; }
  .color select { padding-left: 20px; }
  .rule { width: 65px; height: 2px; margin-left: 14px; background: #fff; }
  .linetype select { padding-left: 26px; }
  .split { position: relative; display: flex; }
  .split button { border: 2px solid #2c3c40; border-radius: 4px; height: 38px; flex: none; }
  .split.h { gap: 6px; }
  .split.h button { width: 39px; }
  .split.t { gap: 6px; padding-left: 6px; align-items: center; }
  .split.t button { width: 77px; gap: 14px; background: #4f5b6e; }
  .num { height: 34px; text-align: right; padding: 0 4px; border-radius: 0; border-left-color: #4b97f0; }
  .tick { position: absolute; left: 85px; bottom: 5px; width: 1px; height: 12px; background: #8a929e; }

  .layout-tabs { display: flex; gap: 2px; height: 44px; margin-right: 2px; background: #3a4554; }
  .layout-tabs button { height: 44px; width: 116px; font-size: 21px; color: #a4a9af; border-right: 2px solid #222932; }
  .layout-tabs .on { width: 118px; padding-right: 4px; background: #4c5a70; color: #fff; font-weight: 600; }
  .layout-tabs .plus { width: 44px; }
  .status { display: flex; align-items: center; justify-content: flex-end; gap: 4px; height: 54px; margin-right: 2px; padding-right: 8px; background: #3a4554; }
  .coords { margin-right: 4px; padding-bottom: 4px; font-size: 24px; color: #b9bbbd; white-space: nowrap; }
  .status button { width: 50px; height: 50px; flex: none; }
  .status .on { background: #6390bd; }
  .status .wide { width: 70px; gap: 3px; }
  .status .wide:has(span) { width: 104px; }
  .status .wide span { margin: 0 5px 0 -8px; font-size: 24px; color: #b9bbbd; }
</style>
